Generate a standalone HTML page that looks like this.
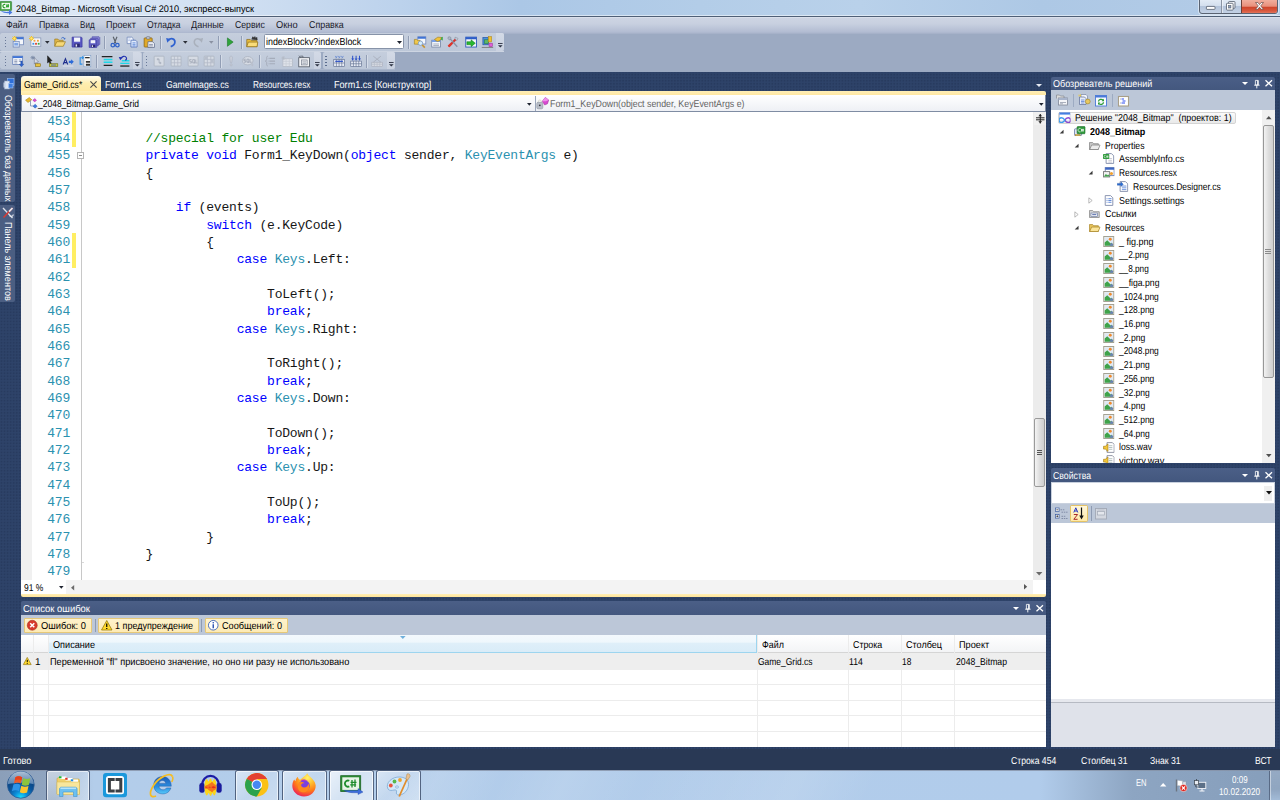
<!DOCTYPE html>
<html><head><meta charset="utf-8"><title>2048_Bitmap - Microsoft Visual C# 2010</title>
<style>
*{box-sizing:border-box;margin:0;padding:0}
html,body{width:1280px;height:800px;overflow:hidden;background:#2e4369 radial-gradient(circle at 1.5px 1.5px,#283b5f .75px,rgba(40,59,95,0) 1.25px) 0 0/3.05px 3.05px;font-family:"Liberation Sans",sans-serif;font-size:9.4px;color:#000}
.a{position:absolute}
.t{position:absolute;white-space:pre;line-height:1;transform-origin:0 0;text-rendering:geometricPrecision}
svg{position:absolute;overflow:visible}
.k{color:#0000ff}.y{color:#2b91af}.c{color:#008000}
.cl{position:absolute;left:84.6px;white-space:pre;font-family:"Liberation Mono",monospace;font-size:13px;letter-spacing:-0.2px;line-height:17.33px;height:17.33px;color:#161616}
.ln{position:absolute;left:32px;width:38px;text-align:right;white-space:pre;font-family:"Liberation Mono",monospace;font-size:13px;letter-spacing:-0.2px;line-height:17.33px;height:17.33px;color:#2b91af}
</style></head><body>
<div class="a" style="left:0px;top:0px;width:1280px;height:17px;background:linear-gradient(90deg,#dfeaf7 0,#d1e0f2 230px,#bcd2ec 400px,#abc7e6 520px,#b3cde8 700px,#b9d1ea 860px,#adc8e5 1040px,#b4cce7 1280px)"></div>
<div class="a" style="left:0px;top:14.6px;width:1280px;height:1px;background:rgba(255,255,255,.5)"></div>
<div class="a" style="left:0px;top:15.6px;width:1280px;height:1.4px;background:#4f5f76"></div>
<div class="t" style="left:16.00px;top:5px;font-size:9.65px;color:#000;transform:scaleX(0.9474);">2048_Bitmap - Microsoft Visual C# 2010, экспресс-выпуск</div>
<svg style="left:0px;top:1.1px" width="12.6" height="13.5" viewBox="0 0 12.6 13.5"><rect x="0" y=".5" width="11.600" height="9" rx=".6" fill="#4ea64c"/><rect x="0" y=".5" width="11.600" height="9" rx=".6" fill="none" stroke="#2f7f30" stroke-width=".6"/><rect x="1.600" y="1.900" width="8.400" height="6.200" fill="#f0f8ee"/><path d="M5.300 3.500a1.700 1.700 0 1 0 0 3.100" fill="none" stroke="#1c9a20" stroke-width="1.100"/><path d="M6.900 3.300v3.500M8.300 3v3.500M6.200 4.300h2.900M6 5.500h2.900" stroke="#1c9a20" stroke-width=".8"/><path d="M.8 10.100c2.500.8 5.500.9 8.200.7V8.600l3.400 2.900L9 14v-1.700c-3 .2-6-.4-8.200-2.200z" fill="#4a7ae0"/></svg>
<div class="a" style="left:1199px;top:-2px;width:79px;height:15.6px;border:1px solid #5a6372;border-radius:0 0 3px 3px;overflow:hidden;background:linear-gradient(#e4ecf6 0,#d4dfee 48%,#b3c3da 52%,#c3d1e5 100%);box-shadow:0 0 0 1px rgba(255,255,255,.45)"><div class="a" style="left:20.500px;top:0;width:1px;height:16px;background:#8a93a3"></div><div class="a" style="left:21.500px;top:0;width:1px;height:16px;background:rgba(255,255,255,.5)"></div><div class="a" style="left:41px;top:0;width:37px;height:16px;background:linear-gradient(#f2b3a3 0,#e8907c 45%,#cf452b 52%,#d9593f 75%,#e8907a 100%);border-left:1px solid #6b4038"></div></div>
<svg style="left:1206px;top:6.2px" width="9.4" height="3.8" viewBox="0 0 9.4 3.8"><rect x=".4" y=".4" width="8.600" height="3" rx=".6" fill="#fff" stroke="#535c6b" stroke-width=".8"/></svg>
<svg style="left:1225.6px;top:1.2px" width="9.6" height="9.6" viewBox="0 0 9.6 9.6"><rect x="2.600" y=".5" width="6.400" height="6.800" rx=".7" fill="#f4f6fa" stroke="#535c6b" stroke-width=".8"/><rect x=".5" y="2.300" width="6.600" height="6.800" rx=".7" fill="#fff" stroke="#535c6b" stroke-width=".8"/><rect x="2.700" y="4.600" width="2.200" height="2.400" fill="#8fa2c0" stroke="#535c6b" stroke-width=".6"/></svg>
<svg style="left:1255.2px;top:2.2px" width="9" height="7.8" viewBox="0 0 9 7.8"><path d="M.5.500h2.400L4.500 2.600 6.100.5h2.400L5.700 3.900 8.500 7.300H6.100L4.500 5.200 2.900 7.300H.5L3.300 3.900z" fill="#fff" stroke="#6a4a48" stroke-width=".7"/></svg>
<div class="a" style="left:0px;top:17px;width:1280px;height:15px;background:linear-gradient(#e2e7f0 0,#cdd4e3 8%,#c8d0e0 45%,#b2bcd2 100%)"></div>
<div class="t" style="left:5.60px;top:21px;font-size:9.96px;color:#1b1b2a;transform:scaleX(0.8863);">Файл</div>
<div class="t" style="left:38.50px;top:21px;font-size:9.96px;color:#1b1b2a;transform:scaleX(0.8862);">Правка</div>
<div class="t" style="left:79.60px;top:21px;font-size:9.96px;color:#1b1b2a;transform:scaleX(0.8104);">Вид</div>
<div class="t" style="left:105.70px;top:21px;font-size:9.96px;color:#1b1b2a;transform:scaleX(0.9086);">Проект</div>
<div class="t" style="left:146.80px;top:21px;font-size:9.96px;color:#1b1b2a;transform:scaleX(0.8515);">Отладка</div>
<div class="t" style="left:191.20px;top:21px;font-size:9.96px;color:#1b1b2a;transform:scaleX(0.9119);">Данные</div>
<div class="t" style="left:234.80px;top:21px;font-size:9.96px;color:#1b1b2a;transform:scaleX(0.8741);">Сервис</div>
<div class="t" style="left:275.90px;top:21px;font-size:9.96px;color:#1b1b2a;transform:scaleX(0.9334);">Окно</div>
<div class="t" style="left:308.80px;top:21px;font-size:9.96px;color:#1b1b2a;transform:scaleX(0.8912);">Справка</div>
<div class="a" style="left:0px;top:32px;width:1280px;height:40px;background:#9caac2"></div>
<div class="a" style="left:0px;top:32px;width:1280px;height:1.5px;background:linear-gradient(#b2bcd2,#a2aec6)"></div>
<div class="a" style="left:0px;top:33px;width:504px;height:17.6px;background:linear-gradient(#c5cedd,#bcc7d8);border-radius:2px"></div>
<div class="a" style="left:0px;top:52px;width:141.5px;height:17.2px;background:linear-gradient(#c5cedd,#bcc7d8);border-radius:2px"></div>
<div class="a" style="left:143px;top:52px;width:178.3px;height:17.2px;background:linear-gradient(#c5cedd,#bcc7d8);border-radius:2px"></div>
<div class="a" style="left:322.7px;top:52px;width:72.7px;height:17.2px;background:linear-gradient(#c5cedd,#bcc7d8);border-radius:2px"></div>
<div class="a" style="left:0px;top:50.6px;width:504px;height:1px;background:#cdd5e2"></div>
<div class="a" style="left:0px;top:69.2px;width:395px;height:1px;background:#aab6cb"></div>
<div class="a" style="left:495.8px;top:33px;width:8.2px;height:17.6px;background:linear-gradient(#d3dae6,#c9d1e0);border-radius:0 2px 2px 0"></div><svg style="left:497.6px;top:43.2px" width="4.6" height="4.6" viewBox="0 0 4.6 4.6"><path d="M0 .5h4.600" stroke="#2a3040" stroke-width=".9"/><path d="M0 2.200h4.600L2.300 4.600z" fill="#2a3040"/></svg>
<div class="a" style="left:133.2px;top:52px;width:8.3px;height:17.2px;background:linear-gradient(#d3dae6,#c9d1e0);border-radius:0 2px 2px 0"></div><svg style="left:135.05px;top:61.8px" width="4.6" height="4.6" viewBox="0 0 4.6 4.6"><path d="M0 .5h4.600" stroke="#2a3040" stroke-width=".9"/><path d="M0 2.200h4.600L2.300 4.600z" fill="#2a3040"/></svg>
<div class="a" style="left:313.7px;top:52px;width:7.6px;height:17.2px;background:linear-gradient(#d3dae6,#c9d1e0);border-radius:0 2px 2px 0"></div><svg style="left:315.2px;top:61.8px" width="4.6" height="4.6" viewBox="0 0 4.6 4.6"><path d="M0 .5h4.600" stroke="#2a3040" stroke-width=".9"/><path d="M0 2.200h4.600L2.300 4.600z" fill="#2a3040"/></svg>
<div class="a" style="left:387px;top:52px;width:8.4px;height:17.2px;background:linear-gradient(#d3dae6,#c9d1e0);border-radius:0 2px 2px 0"></div><svg style="left:388.9px;top:61.8px" width="4.6" height="4.6" viewBox="0 0 4.6 4.6"><path d="M0 .5h4.600" stroke="#2a3040" stroke-width=".9"/><path d="M0 2.200h4.600L2.300 4.600z" fill="#2a3040"/></svg>
<div class="a" style="left:4.6px;top:36.6px;width:1.5px;height:1.5px;background:#4d5f82;border-radius:.5px"></div><div class="a" style="left:4.6px;top:39.65px;width:1.5px;height:1.5px;background:#4d5f82;border-radius:.5px"></div><div class="a" style="left:4.6px;top:42.7px;width:1.5px;height:1.5px;background:#4d5f82;border-radius:.5px"></div><div class="a" style="left:4.6px;top:45.75px;width:1.5px;height:1.5px;background:#4d5f82;border-radius:.5px"></div>
<div class="a" style="left:4.6px;top:55.6px;width:1.5px;height:1.5px;background:#4d5f82;border-radius:.5px"></div><div class="a" style="left:4.6px;top:58.65px;width:1.5px;height:1.5px;background:#4d5f82;border-radius:.5px"></div><div class="a" style="left:4.6px;top:61.7px;width:1.5px;height:1.5px;background:#4d5f82;border-radius:.5px"></div><div class="a" style="left:4.6px;top:64.75px;width:1.5px;height:1.5px;background:#4d5f82;border-radius:.5px"></div>
<div class="a" style="left:145.6px;top:55.6px;width:1.5px;height:1.5px;background:#4d5f82;border-radius:.5px"></div><div class="a" style="left:145.6px;top:58.65px;width:1.5px;height:1.5px;background:#4d5f82;border-radius:.5px"></div><div class="a" style="left:145.6px;top:61.7px;width:1.5px;height:1.5px;background:#4d5f82;border-radius:.5px"></div><div class="a" style="left:145.6px;top:64.75px;width:1.5px;height:1.5px;background:#4d5f82;border-radius:.5px"></div>
<div class="a" style="left:325.3px;top:55.6px;width:1.5px;height:1.5px;background:#4d5f82;border-radius:.5px"></div><div class="a" style="left:325.3px;top:58.65px;width:1.5px;height:1.5px;background:#4d5f82;border-radius:.5px"></div><div class="a" style="left:325.3px;top:61.7px;width:1.5px;height:1.5px;background:#4d5f82;border-radius:.5px"></div><div class="a" style="left:325.3px;top:64.75px;width:1.5px;height:1.5px;background:#4d5f82;border-radius:.5px"></div>
<svg style="left:12.4px;top:35.6px" width="12.2" height="12.2" viewBox="0 0 16 16"><rect x="4" y="1.500" width="11" height="10" fill="#f4f7fc" stroke="#6f86b8"/><rect x="4" y="1.500" width="11" height="2.800" fill="#3f74d6"/><rect x="1.500" y="7" width="8" height="7.500" fill="#dfe9f8" stroke="#6f86b8"/><rect x="3" y="9" width="5" height="3.500" fill="#7fa6e6"/><path d="M3.200 0v6.400M0 3.200h6.400M.9.900l4.600 4.600M5.500.9.900 5.500" stroke="#f3c21c" stroke-width="1.300"/><circle cx="3.200" cy="3.200" r="1.500" fill="#ffe680"/></svg>
<svg style="left:28.9px;top:35.6px" width="12.2" height="12.2" viewBox="0 0 16 16"><rect x="2.500" y="2.500" width="13" height="11" fill="#f4f7fc" stroke="#8796b4"/><rect x="6" y="5" width="2.400" height="2.400" fill="#f0a040"/><rect x="10.500" y="5" width="2.400" height="2.400" fill="#f0a040"/><rect x="4.500" y="9" width="2.400" height="2.400" fill="#3b8fe0"/><rect x="8" y="9" width="2.400" height="2.400" fill="#e0402c"/><rect x="11.500" y="9" width="2.400" height="2.400" fill="#38a844"/><path d="M3.200 0v6.400M0 3.200h6.400M.9.900l4.600 4.600M5.500.9.900 5.500" stroke="#f3c21c" stroke-width="1.300"/><circle cx="3.200" cy="3.200" r="1.500" fill="#ffe680"/></svg>
<svg style="left:54.3px;top:35.6px" width="12.2" height="12.2" viewBox="0 0 16 16"><path d="M1 13.500V4h4l1.500 1.600H12v2" fill="#e2b84a" stroke="#9a7a20" stroke-width=".9"/><path d="M1 13.500 3.600 7.500H15l-2.800 6z" fill="#f7d977" stroke="#9a7a20" stroke-width=".9"/><path d="M9.500 3.200c1.500-2 4-1.600 4.600.6" fill="none" stroke="#3f6fc8" stroke-width="1.200"/><path d="M15.300 2.200 14.300 5l-2.300-1.500z" fill="#3f6fc8"/></svg>
<svg style="left:71.0px;top:35.6px" width="12.2" height="12.2" viewBox="0 0 16 16"><path d="M1.500 1.500h12l1 1v12h-13z" fill="#5a58c4" stroke="#3a38a0"/><rect x="4" y="2" width="8" height="5.500" fill="#f2f4fb"/><rect x="4.500" y="10" width="7" height="4.500" fill="#2a2870"/><rect x="6" y="11" width="2" height="3" fill="#e8e8f4"/></svg>
<svg style="left:87.6px;top:35.6px" width="12.2" height="12.2" viewBox="0 0 16 16"><path d="M5.500 1h9l1 1v9h-10z" fill="#8a88d4" stroke="#4a48a8" stroke-width=".8"/><path d="M3.500 3h9l1 1v9h-10z" fill="#7472cc" stroke="#4a48a8" stroke-width=".8"/><path d="M1.500 5h9l1 1v9h-10z" fill="#605ec4" stroke="#3e3ca0" stroke-width=".8"/><rect x="3.500" y="5.500" width="6" height="4" fill="#f2f4fb"/><rect x="4" y="11.500" width="5.500" height="3.200" fill="#2a2870"/><rect x="5" y="12.200" width="1.600" height="2.200" fill="#e8e8f4"/></svg>
<svg style="left:109.3px;top:35.6px" width="12.2" height="12.2" viewBox="0 0 16 16"><path d="M5.500 1 9 9.500M10.500 1 7 9.500" stroke="#5a6068" stroke-width="1.500" fill="none"/><circle cx="5" cy="12" r="2.300" fill="none" stroke="#2f62c8" stroke-width="1.700"/><circle cx="11" cy="12" r="2.300" fill="none" stroke="#2f62c8" stroke-width="1.700"/></svg>
<svg style="left:126.4px;top:35.6px" width="12.2" height="12.2" viewBox="0 0 16 16"><path d="M1.500 1.500h6l2 2v6.500h-8z" fill="#f4f8ff" stroke="#6f86b8"/><path d="M6.500 5.500h6l2 2v7h-8z" fill="#dfeafc" stroke="#4f6eb8"/><path d="M8.500 9h4M8.500 11h4M8.500 13h4" stroke="#3f6fd0" stroke-width=".9"/><path d="M3 4h3M3 6h2" stroke="#8fa6d6" stroke-width=".9"/></svg>
<svg style="left:143.4px;top:35.6px" width="12.2" height="12.2" viewBox="0 0 16 16"><rect x="1.500" y="2.500" width="10.500" height="12" rx="1" fill="#e0a928" stroke="#8a6410"/><rect x="4.500" y="1" width="4.500" height="3" rx=".8" fill="#c8ccd6" stroke="#5c6270" stroke-width=".8"/><path d="M6.500 7.500h6l2.500 2.500v5h-8.500z" fill="#f4f6fb" stroke="#5c6a8a"/><path d="M8 11h5M8 13h5" stroke="#5c6a8a" stroke-width=".9"/></svg>
<svg style="left:165.3px;top:35.6px" width="12.2" height="12.2" viewBox="0 0 16 16"><path d="M4.500 5.500C8 2 13 3.500 13 8c0 3-2 5-5.500 6" fill="none" stroke="#2f62d0" stroke-width="2.300"/><path d="M1.500 2.500 7.500 4 3 9z" fill="#2f62d0"/></svg>
<svg style="left:191.5px;top:35.6px" width="12.2" height="12.2" viewBox="0 0 16 16"><path d="M11.500 5.500C8 2 3 3.500 3 8c0 3 2 5 5.500 6" fill="none" stroke="#a9b0bc" stroke-width="2"/><path d="M14.500 2.500 8.500 4 13 9z" fill="#a9b0bc"/></svg>
<svg style="left:223.5px;top:35.6px" width="12.2" height="12.2" viewBox="0 0 16 16"><path d="M4.500 2.500 12 8 4.500 13.500z" fill="#2ea33a" stroke="#1c7a28" stroke-width=".8"/></svg>
<svg style="left:245.9px;top:35.6px" width="12.2" height="12.2" viewBox="0 0 16 16"><path d="M1 14V4.500h4.500L7 6h7.500v8z" fill="#e9bd3e" stroke="#8a6a14" stroke-width=".9"/><path d="M1 14 3 8h12.500l-1 6z" fill="#f9dc78" stroke="#8a6a14" stroke-width=".9"/><path d="M7.500 4.500 9 1l1.500 2 1.200-2.200 1 2.500 1.500-1.500.5 3.500" fill="#3a3a3a" stroke="#222" stroke-width=".8"/></svg>
<svg style="left:413.9px;top:35.6px" width="12.2" height="12.2" viewBox="0 0 16 16"><rect x="5" y="1" width="10.500" height="9.500" fill="#f4f7fc" stroke="#6f86b8"/><rect x="5" y="1" width="10.500" height="2.600" fill="#3f74d6"/><path d="M.5 4.500h3l1.200 1.200H8v5H.5z" fill="#f0c84c" stroke="#9a7a20" stroke-width=".8"/><circle cx="8.500" cy="9.500" r="2.900" fill="#d6ecfa" stroke="#7d9cc4" stroke-width="1.100"/><path d="M10.800 11.800 14.200 15.200" stroke="#c89430" stroke-width="2.200"/></svg>
<svg style="left:430.6px;top:35.6px" width="12.2" height="12.2" viewBox="0 0 16 16"><rect x="1" y="5.500" width="11.500" height="9" fill="#f4f7fc" stroke="#6f7f9c"/><rect x="1" y="5.500" width="11.500" height="2.300" fill="#6f9ae6"/><path d="M3 10.500h7.500M3 12.500h7.500" stroke="#8a95aa" stroke-width=".9"/><path d="M4.500 4.500 9 1.500l5.500.5-3.500 4.500-3 .5z" fill="#f0c23c" stroke="#a07c18" stroke-width=".8"/><path d="M13 2l2.500-1v5L13 5z" fill="#46a852"/></svg>
<svg style="left:447.3px;top:35.6px" width="12.2" height="12.2" viewBox="0 0 16 16"><path d="M2 13.800 12.500 3.200" stroke="#d8302c" stroke-width="2.600"/><path d="M2 13.800 6 9.800" stroke="#e0382c" stroke-width="3"/><path d="M3 2.500 13.500 14" stroke="#8a94a6" stroke-width="1.800"/><path d="M1.500 1.500c1.500-1 3.500-.5 4 1.500l-2 2c-2-.3-2.800-2-2-3.500z" fill="#aeb8c8" stroke="#6c7688" stroke-width=".6"/><path d="M10.500 1.500 14.500 3l-1.500 3-2.500-2z" fill="#c4ccd8" stroke="#7a8496" stroke-width=".6"/></svg>
<svg style="left:464.5px;top:35.6px" width="12.2" height="12.2" viewBox="0 0 16 16"><rect x="1" y="1.500" width="14" height="13" fill="#f4f7fc" stroke="#2c58b8" stroke-width="1.200"/><rect x="1" y="1.500" width="14" height="2.800" fill="#2c5cc8"/><path d="M2.500 7.500H8V5l5.500 4.500L8 14v-2.500H2.500z" fill="#28b830" stroke="#0f7a18" stroke-width=".7"/></svg>
<svg style="left:480.9px;top:35.6px" width="12.2" height="12.2" viewBox="0 0 16 16"><rect x="2.500" y="2" width="7" height="9.500" fill="#4a90e0" stroke="#2c5ca8"/><rect x="4.500" y="5" width="5" height="5" fill="#5cb868" stroke="#2c7838" stroke-width=".7"/><rect x="9.500" y=".8" width="4.500" height="7" fill="#f0c030" stroke="#a8841c" stroke-width=".7"/><rect x="10.500" y="9.500" width="4.500" height="4.500" fill="#e060d8" stroke="#9c3896" stroke-width=".7"/><path d="M1 15h15" stroke="#7a7a7a" stroke-width="1.200"/></svg>
<div class="a" style="left:103.7px;top:35.5px;width:1px;height:13px;background:#929eb5"></div>
<div class="a" style="left:104.7px;top:35.5px;width:1px;height:13px;background:#d5dce8"></div>
<div class="a" style="left:159.9px;top:35.5px;width:1px;height:13px;background:#929eb5"></div>
<div class="a" style="left:160.9px;top:35.5px;width:1px;height:13px;background:#d5dce8"></div>
<div class="a" style="left:218.4px;top:35.5px;width:1px;height:13px;background:#929eb5"></div>
<div class="a" style="left:219.4px;top:35.5px;width:1px;height:13px;background:#d5dce8"></div>
<div class="a" style="left:240.7px;top:35.5px;width:1px;height:13px;background:#929eb5"></div>
<div class="a" style="left:241.7px;top:35.5px;width:1px;height:13px;background:#d5dce8"></div>
<div class="a" style="left:408px;top:35.5px;width:1px;height:13px;background:#929eb5"></div>
<div class="a" style="left:409px;top:35.5px;width:1px;height:13px;background:#d5dce8"></div>
<svg style="left:44.9px;top:40.6px" width="4.6" height="2.7" viewBox="0 0 4.6 2.7"><path d="M0 0h4.600L2.300 2.700z" fill="#2c3038"/></svg>
<svg style="left:182.7px;top:40.6px" width="4.6" height="2.7" viewBox="0 0 4.6 2.7"><path d="M0 0h4.600L2.300 2.700z" fill="#2c3038"/></svg>
<svg style="left:209.2px;top:40.6px" width="4.6" height="2.7" viewBox="0 0 4.6 2.7"><path d="M0 0h4.600L2.300 2.700z" fill="#8a92a2"/></svg>
<svg style="left:12.4px;top:54.9px" width="12.2" height="12.2" viewBox="0 0 16 16"><rect x="1" y="1.500" width="13" height="11" fill="#f4f7fc" stroke="#5c78b4"/><rect x="1" y="1.500" width="13" height="2.500" fill="#3f74d6"/><path d="M3 6.500h4M3 8.500h4M3 10.500h4M9 6.500h3M9 8.500h3" stroke="#7a88a8" stroke-width="1"/><path d="M11.500 8v4h-2l3 3.500 3-3.500h-2V8z" fill="#2c62d0" stroke="#1c4494" stroke-width=".5"/></svg>
<svg style="left:28.9px;top:54.9px" width="12.2" height="12.2" viewBox="0 0 16 16"><path d="M2 3.500h6M5 1v5M3 1.500l4 4M7 1.500l-4 4" stroke="#7a8aa6" stroke-width="1.100"/><path d="M7 3.500 12.500 9 10 9.500l1.500 3-1.500.7L8.500 10 7 12z" fill="#d8dce6" stroke="#6a7488" stroke-width=".7"/><rect x="8.500" y="11.500" width="6.500" height="3.500" fill="#e8c440" stroke="#8a7018" stroke-width=".8"/></svg>
<svg style="left:45.9px;top:54.9px" width="12.2" height="12.2" viewBox="0 0 16 16"><path d="M2 1 8 7.500 5.500 8l1.500 3.500-1.500.7L4 8.800 2 10.500z" fill="#222" stroke="#000" stroke-width=".5"/><rect x="4.500" y="11.500" width="11" height="3.500" fill="#d8d838" stroke="#6a6a14" stroke-width=".8"/><path d="M6.500 13.200h7" stroke="#3a50c0" stroke-width="1.200"/></svg>
<svg style="left:62.4px;top:54.9px" width="12.2" height="12.2" viewBox="0 0 16 16"><path d="M1.500 12.500 4.500 5 7.500 12.500M2.600 10h3.800" stroke="#1c2c8c" stroke-width="1.400" fill="none"/><path d="M9 7.500h3V5.500L15.500 9 12 12.500V10.500H9z" fill="#2c6ad8"/><path d="M1 14.500h14" stroke="#e8eaf2" stroke-width="1"/></svg>
<svg style="left:79.4px;top:54.9px" width="12.2" height="12.2" viewBox="0 0 16 16"><rect x="6.500" y=".5" width="9" height="15" fill="#fdfdfd" stroke="#7d9cc4" stroke-width=".8"/><path d="M8 3.500h6" stroke="#222" stroke-width="1.600"/><path d="M9 9h5.500M9 12.800h5.500" stroke="#333" stroke-width="2.400"/><path d="M4.500 3.500H1.500V12h3" fill="none" stroke="#2c90e8" stroke-width="1.400"/><path d="M4 1 7 3.500 4 6z" fill="#2c90e8"/></svg>
<svg style="left:100.9px;top:54.9px" width="12.2" height="12.2" viewBox="0 0 16 16"><path d="M1 2h14M3.500 13.500H15" stroke="#222" stroke-width="1.700"/><path d="M3.500 6h11.500M3.500 9.500h11.500" stroke="#1ed8e8" stroke-width="2"/></svg>
<svg style="left:118.3px;top:54.9px" width="12.2" height="12.2" viewBox="0 0 16 16"><path d="M3 14.500h12" stroke="#222" stroke-width="1.700"/><path d="M5 7.500h10M3 11h12" stroke="#1ed8e8" stroke-width="1.800"/><path d="M4.500 4.500C5 1.500 9.500.5 11 3.500c.8 1.800-.5 3-1.500 3.300" fill="none" stroke="#2030b0" stroke-width="1.500"/><path d="M1 2.500 6 3 3 7z" fill="#2030b0"/></svg>
<svg style="left:152.9px;top:54.9px" width="12.2" height="12.2" viewBox="0 0 16 16"><rect x="1.500" y="1.500" width="13" height="13" rx="1" fill="#d6dbe4" stroke="#aab1bf"/><path d="M5 5.500h3v5h3M6.500 4v3M9.500 9v3" stroke="#a2a9b8" stroke-width="1" fill="none"/></svg>
<svg style="left:169.7px;top:54.9px" width="12.2" height="12.2" viewBox="0 0 16 16"><rect x="1.500" y="1.500" width="13" height="13" rx="1" fill="#d6dbe4" stroke="#aab1bf"/><path d="M1.500 5.800h13M1.500 10.200h13M5.800 1.500v13M10.200 1.500v13" stroke="#b2b8c6" stroke-width="1"/></svg>
<svg style="left:186.5px;top:54.9px" width="12.2" height="12.2" viewBox="0 0 16 16"><rect x="1.500" y="1.500" width="13" height="13" rx="1" fill="#d6dbe4" stroke="#aab1bf"/><path d="M3.500 10.500h2.300V8.300H3.500V6h2.500M7.500 6h2.500v4.500H7.500zM9 9.500l1.500 1.800M11.500 6v4.500h2.300" stroke="#9aa1b0" stroke-width=".9" fill="none"/></svg>
<svg style="left:203.2px;top:54.9px" width="12.2" height="12.2" viewBox="0 0 16 16"><rect x="1.500" y="1.500" width="13" height="13" rx="1" fill="#d6dbe4" stroke="#aab1bf"/><path d="M1.500 5.800h13M1.500 10.200h13M5.800 1.500v13M10.200 1.500v13" stroke="#b2b8c6" stroke-width="1"/><rect x="2" y="2" width="3.500" height="3.500" fill="#b8bfcc"/><rect x="10.500" y="6.200" width="3.500" height="3.800" fill="#b8bfcc"/></svg>
<svg style="left:224.6px;top:54.9px" width="12.2" height="12.2" viewBox="0 0 16 16"><path d="M8 1.500c1.500 0 2 1 1.800 3L8.800 10H7.200L6.200 4.500c-.2-2 .3-3 1.800-3z" fill="#c9ced9" stroke="#a9b0be" stroke-width=".7"/><circle cx="8" cy="13" r="1.400" fill="#c9ced9" stroke="#a9b0be" stroke-width=".7"/></svg>
<svg style="left:242.4px;top:54.9px" width="12.2" height="12.2" viewBox="0 0 16 16"><ellipse cx="7.500" cy="7.500" rx="7" ry="5.500" fill="#d6dbe4" stroke="#aab1bf"/><path d="M2.500 9.500h2.300V7.500H2.500V5.500h2.500M6.500 5.500h2.500v4H6.500zM8 8.700l1.500 1.600M10.500 5.500v4h2.300" stroke="#949bab" stroke-width=".9" fill="none"/><path d="M13 10v2.500h-1.500l2 2.500 2-2.500H14V10z" fill="#b9bfcc"/></svg>
<svg style="left:263.9px;top:54.9px" width="12.2" height="12.2" viewBox="0 0 16 16"><path d="M5 1.500C3 1.500 3.500 4 3.500 5.500S3 8 1.500 8C3 8 3.500 9 3.500 10.500S3 14.500 5 14.500" fill="none" stroke="#a5acba" stroke-width="1.200"/><path d="M7 4.500h7.500M7 8h7.500M7 11.500h7.500" stroke="#a5acba" stroke-width="1.500"/><path d="M5 4.500h1M5 8h1M5 11.500h1" stroke="#a5acba" stroke-width="1"/></svg>
<svg style="left:280.9px;top:54.9px" width="12.2" height="12.2" viewBox="0 0 16 16"><rect x="2.500" y="5" width="12.500" height="10" fill="#dfe3ea" stroke="#b4bac6"/><path d="M2.500 8.300h12.500M2.500 11.600h12.500M6.700 5v10M10.900 5v10" stroke="#c4cad4" stroke-width=".9"/><path d="M.5 4h5M3 1.500v5M1.200 2.200l3.600 3.600M4.800 2.200 1.200 5.800" stroke="#b4bac6" stroke-width="1"/></svg>
<svg style="left:297.9px;top:54.9px" width="12.2" height="12.2" viewBox="0 0 16 16"><rect x="1" y="3.500" width="14" height="12" fill="#f2f3f6" stroke="#555c68" stroke-width="1.100"/><path d="M3 1.500h3.500V3.500" fill="none" stroke="#555c68" stroke-width="1"/><rect x="4.500" y="6.500" width="7.500" height="6.500" fill="#e4e6ec" stroke="#7a8290" stroke-width=".9"/><path d="M6 9h4.500M6 11h4.500" stroke="#8a92a0" stroke-width=".8"/><path d="M1 1l3 2.500" stroke="#555c68"/></svg>
<svg style="left:333.1px;top:54.9px" width="12.2" height="12.2" viewBox="0 0 16 16"><rect x="1" y="6" width="14" height="9" fill="#e8ecf6" stroke="#5a6a8c" stroke-width=".8"/><path d="M1 10.500h14M4.500 6v9M8 6v9M11.500 6v9" stroke="#5a6a8c" stroke-width=".8"/><path d="M3 8.300h10" stroke="#2c50c8" stroke-width="1.600"/><path d="M3 1.200l1.300 2.600L5.600 1.200M7 1.200l1.300 2.600L9.600 1.200M11 1.200l1.300 2.600 1.300-2.600" stroke="#5a80d0" stroke-width=".9" fill="none"/><path d="M2.500 4.800h11" stroke="#7a8cb0" stroke-width=".7" stroke-dasharray="1 1"/></svg>
<svg style="left:349.9px;top:54.9px" width="12.2" height="12.2" viewBox="0 0 16 16"><rect x="1" y="8" width="14" height="7" fill="#e8ecf6" stroke="#5a6a8c" stroke-width=".8"/><path d="M1 11.500h14M4.500 8v7M8 8v7M11.500 8v7" stroke="#5a6a8c" stroke-width=".8"/><path d="M3.500 1v6M8 1v6M12.500 1v6" stroke="#2c50c8" stroke-width="1.300"/><path d="M1.500 4.500l2 2.500 2-2.500zM6 4.500l2 2.500 2-2.500zM10.500 4.500l2 2.500 2-2.500z" fill="#2c50c8"/></svg>
<svg style="left:371.4px;top:54.9px" width="12.2" height="12.2" viewBox="0 0 16 16"><rect x="1" y="9.500" width="14" height="5.500" fill="#d6dae2" stroke="#a8aebb" stroke-width=".8"/><path d="M1 12.200h14M4.500 9.500V15M8 9.500V15M11.500 9.500V15" stroke="#b4bac6" stroke-width=".8"/><path d="M3 1.500l10 8M13 1.500l-10 8" stroke="#a8aebb" stroke-width="1.100"/></svg>
<div class="a" style="left:95.5px;top:54.5px;width:1px;height:13px;background:#929eb5"></div>
<div class="a" style="left:96.5px;top:54.5px;width:1px;height:13px;background:#d5dce8"></div>
<div class="a" style="left:219.7px;top:54.5px;width:1px;height:13px;background:#929eb5"></div>
<div class="a" style="left:220.7px;top:54.5px;width:1px;height:13px;background:#d5dce8"></div>
<div class="a" style="left:259px;top:54.5px;width:1px;height:13px;background:#929eb5"></div>
<div class="a" style="left:260px;top:54.5px;width:1px;height:13px;background:#d5dce8"></div>
<div class="a" style="left:366px;top:54.5px;width:1px;height:13px;background:#929eb5"></div>
<div class="a" style="left:367px;top:54.5px;width:1px;height:13px;background:#d5dce8"></div>
<div class="a" style="left:263.5px;top:34.3px;width:140px;height:15.2px;background:#fff;border:1px solid #8793a8;border-radius:1.5px"></div>
<div class="t" style="left:265.80px;top:38px;font-size:10.18px;color:#000;transform:scaleX(0.8724);">indexBlockv?indexBlock</div>
<svg style="left:396.6px;top:40.8px" width="5" height="3" viewBox="0 0 5 3"><path d="M0 0h5L2.500 3z" fill="#1f2430"/></svg>
<div class="a" style="left:0px;top:74px;width:15.4px;height:128.3px;background:#4b5e82;border-radius:0 2px 2px 0"></div>
<div class="a" style="left:0px;top:204.6px;width:15.4px;height:97.2px;background:#4b5e82;border-radius:0 2px 2px 0"></div>
<div class="t" style="left:11.53px;top:94.6px;font-size:9.96px;color:#fff;transform:rotate(90deg) scaleX(0.8802);">Обозреватель баз данных</div>
<div class="t" style="left:11.53px;top:221.5px;font-size:9.96px;color:#fff;transform:rotate(90deg) scaleX(0.9110);">Панель элементов</div>
<svg style="left:2.5px;top:78px" width="11.5" height="12" viewBox="0 0 11.5 12"><rect x="4.500" y=".5" width="6.500" height="7" fill="#2f6fd8" stroke="#9cc0f4" stroke-width=".6"/><rect x="1.500" y="3" width="5" height="8" fill="#dfe8f6" stroke="#8ca0c4" stroke-width=".6"/><rect x="5.500" y="5.500" width="4.500" height="4.500" fill="#3f7fe0" stroke="#a8c8f8" stroke-width=".6"/><rect x=".5" y="4.500" width="2" height="5" fill="#c4d0e4"/></svg>
<svg style="left:2px;top:206.5px" width="11.5" height="12" viewBox="0 0 11.5 12"><path d="M1 1l9.500 10" stroke="#e0e4ec" stroke-width="1.300"/><path d="M10.500 1 1.500 10.500" stroke="#d83a34" stroke-width="1.600"/><path d="M10.500 1 7 4.700" stroke="#e8ecf2" stroke-width="1.800"/><path d="M7.500 8.500c1.500 1.500 3.500 1 3.800-1" fill="none" stroke="#e0e4ec" stroke-width="1.200"/></svg>
<div class="a" style="left:20.6px;top:76px;width:80.4px;height:16px;background:linear-gradient(#fffcf0,#ffeeb0 45%,#ffe8a0);border-radius:3px 3px 0 0"></div>
<div class="a" style="left:20.6px;top:91px;width:1025.4px;height:4px;background:linear-gradient(#ffefb8,#ffe7a2);border-radius:0 2px 0 0"></div>
<div class="t" style="left:23.70px;top:81px;font-size:10.07px;color:#000;transform:scaleX(0.8460);">Game_Grid.cs*</div>
<div class="t" style="left:105.30px;top:81px;font-size:10.07px;color:#fff;transform:scaleX(0.8656);">Form1.cs</div>
<div class="t" style="left:165.60px;top:81px;font-size:10.07px;color:#fff;transform:scaleX(0.8585);">GameImages.cs</div>
<div class="t" style="left:252.60px;top:81px;font-size:10.07px;color:#fff;transform:scaleX(0.8211);">Resources.resx</div>
<div class="t" style="left:333.80px;top:81px;font-size:10.07px;color:#fff;transform:scaleX(0.9043);">Form1.cs [Конструктор]</div>
<div class="a" style="left:21px;top:95px;width:1025px;height:17px;background:linear-gradient(#ffffff,#eef0f5);border:1px solid #7f8ca3;border-top:none"></div>
<div class="a" style="left:534.5px;top:96px;width:1px;height:15px;background:#9aa6ba"></div>
<div class="t" style="left:38.00px;top:100px;font-size:9.96px;color:#000;transform:scaleX(0.8530);">_2048_Bitmap.Game_Grid</div>
<div class="t" style="left:549.50px;top:100px;font-size:9.96px;color:#636363;transform:scaleX(0.8856);">Form1_KeyDown(object sender, KeyEventArgs e)</div>
<svg style="left:90.2px;top:81px" width="7" height="7" viewBox="0 0 7 7"><path d="M.4.400 6.600 6.600M6.600.4.400 6.600" stroke="#4a4a4a" stroke-width="1.100"/></svg>
<svg style="left:1035.8px;top:83.6px" width="6" height="3" viewBox="0 0 6 3"><path d="M0 0h6L3 3z" fill="#e6ebf4"/></svg>
<svg style="left:526.6px;top:102.6px" width="4.6" height="2.8" viewBox="0 0 4.6 2.8"><path d="M0 0h4.600L2.300 2.800z" fill="#1f2430"/></svg>
<svg style="left:1038.8px;top:102.6px" width="4.6" height="2.8" viewBox="0 0 4.6 2.8"><path d="M0 0h4.600L2.300 2.800z" fill="#1f2430"/></svg>
<svg style="left:24.5px;top:96.5px" width="13" height="12" viewBox="0 0 13 12"><path d="M.5 3.200 4.300.5 6.800 2.800 3 5.500z" fill="#e8b82c" stroke="#9a7a14" stroke-width=".5"/><path d="M5.500 3.500v5.500h3" fill="none" stroke="#7a8aa8" stroke-width=".8"/><path d="M7.800 3.200l2-1.700 1.700 1.700-1.700 1.700z" fill="#e048d0" stroke="#9a2890" stroke-width=".4"/><path d="M8 9.200l2.200-2 2 2-2 2z" fill="#3a7ae0" stroke="#1f4aa0" stroke-width=".4"/></svg>
<svg style="left:536px;top:96.5px" width="13" height="12.5" viewBox="0 0 13 12.5"><path d="M2.300 5.500V4.200c0-1.600 3-1.600 3 0V5.500" fill="none" stroke="#d8d8c8" stroke-width=".9"/><rect x=".8" y="5.300" width="6" height="6.500" rx="1.300" fill="#b8bec8" stroke="#8a909c" stroke-width=".6"/><circle cx="3.800" cy="8.300" r=".9" fill="#3a3a40"/><path d="M9.300.4 12.700 3 11.500 6.800 8.700 8 6.300 4.200z" fill="#d848d0" stroke="#9a2c94" stroke-width=".5"/><path d="M9.300.4 12.700 3 10 4.200 6.300 4.200z" fill="#f090ec"/></svg>
<div class="a" style="left:21px;top:112px;width:1025px;height:469px;background:#fff"></div>
<div class="a" style="left:21px;top:112px;width:11px;height:469px;background:#f0f0f0"></div>
<div class="a" style="left:81px;top:112px;width:1px;height:469px;background:#c8c8c8"></div>
<div class="a" style="left:72.2px;top:112px;width:3.4px;height:34.7px;background:#ffee62"></div>
<div class="a" style="left:72.2px;top:233.3px;width:3.4px;height:34.7px;background:#ffee62"></div>
<div class="a" style="left:77.4px;top:151.6px;width:7px;height:7px;background:#fff;border:1px solid #b4b4b4"></div>
<div class="a" style="left:79.4px;top:154.6px;width:3px;height:1px;background:#8c8c8c"></div>
<div class="a" style="left:81.5px;top:561.5px;width:2.5px;height:1px;background:#d8d8d8"></div>
<div class="ln" style="top:112.60px">453</div>
<div class="ln" style="top:129.93px">454</div>
<div class="cl" style="top:129.93px">        <span class="c">//special for user Edu</span></div>
<div class="ln" style="top:147.27px">455</div>
<div class="cl" style="top:147.27px">        <span class="k">private</span> <span class="k">void</span> Form1_KeyDown(<span class="k">object</span> sender, <span class="y">KeyEventArgs</span> e)</div>
<div class="ln" style="top:164.60px">456</div>
<div class="cl" style="top:164.60px">        {</div>
<div class="ln" style="top:181.93px">457</div>
<div class="ln" style="top:199.26px">458</div>
<div class="cl" style="top:199.26px">            <span class="k">if</span> (events)</div>
<div class="ln" style="top:216.60px">459</div>
<div class="cl" style="top:216.60px">                <span class="k">switch</span> (e.KeyCode)</div>
<div class="ln" style="top:233.93px">460</div>
<div class="cl" style="top:233.93px">                {</div>
<div class="ln" style="top:251.26px">461</div>
<div class="cl" style="top:251.26px">                    <span class="k">case</span> <span class="y">Keys</span>.Left:</div>
<div class="ln" style="top:268.60px">462</div>
<div class="ln" style="top:285.93px">463</div>
<div class="cl" style="top:285.93px">                        ToLeft();</div>
<div class="ln" style="top:303.26px">464</div>
<div class="cl" style="top:303.26px">                        <span class="k">break</span>;</div>
<div class="ln" style="top:320.60px">465</div>
<div class="cl" style="top:320.60px">                    <span class="k">case</span> <span class="y">Keys</span>.Right:</div>
<div class="ln" style="top:337.93px">466</div>
<div class="ln" style="top:355.26px">467</div>
<div class="cl" style="top:355.26px">                        ToRight();</div>
<div class="ln" style="top:372.60px">468</div>
<div class="cl" style="top:372.60px">                        <span class="k">break</span>;</div>
<div class="ln" style="top:389.93px">469</div>
<div class="cl" style="top:389.93px">                    <span class="k">case</span> <span class="y">Keys</span>.Down:</div>
<div class="ln" style="top:407.26px">470</div>
<div class="ln" style="top:424.59px">471</div>
<div class="cl" style="top:424.59px">                        ToDown();</div>
<div class="ln" style="top:441.93px">472</div>
<div class="cl" style="top:441.93px">                        <span class="k">break</span>;</div>
<div class="ln" style="top:459.26px">473</div>
<div class="cl" style="top:459.26px">                    <span class="k">case</span> <span class="y">Keys</span>.Up:</div>
<div class="ln" style="top:476.59px">474</div>
<div class="ln" style="top:493.93px">475</div>
<div class="cl" style="top:493.93px">                        ToUp();</div>
<div class="ln" style="top:511.26px">476</div>
<div class="cl" style="top:511.26px">                        <span class="k">break</span>;</div>
<div class="ln" style="top:528.59px">477</div>
<div class="cl" style="top:528.59px">                }</div>
<div class="ln" style="top:545.92px">478</div>
<div class="cl" style="top:545.92px">        }</div>
<div class="ln" style="top:563.26px">479</div>
<div class="a" style="left:1033px;top:112px;width:13px;height:468.3px;background:#ececec"></div>
<svg style="left:1036.2px;top:571.5px" width="6.4" height="3.6" viewBox="0 0 6.4 3.6"><path d="M0 0h6.400L3.200 3.600z" fill="#6a6a6a"/></svg>
<div class="a" style="left:1034px;top:417.5px;width:10.8px;height:69.8px;background:linear-gradient(90deg,#f4f4f4,#dedede 50%,#cfcfcf);border:1px solid #9a9a9a;border-radius:2px"></div>
<div class="a" style="left:1037px;top:450px;width:5px;height:1px;background:#555"></div>
<div class="a" style="left:1037px;top:452px;width:5px;height:1px;background:#555"></div>
<div class="a" style="left:1037px;top:454px;width:5px;height:1px;background:#555"></div>
<div class="a" style="left:1033.5px;top:112px;width:12.5px;height:12.5px;background:#f0f0f0"></div>
<svg style="left:1035.5px;top:113.5px" width="8.5" height="9.5" viewBox="0 0 8.5 9.5"><path d="M0 3.800h8.500M0 5.800h8.500" stroke="#222" stroke-width="1"/><path d="M4.250 0v9.500" stroke="#222" stroke-width="1"/><path d="M2.300 2.300 4.250.2 6.200 2.300zM2.300 7.200 4.250 9.300 6.200 7.200z" fill="#222"/></svg>
<div class="a" style="left:21px;top:580.3px;width:1025px;height:13.4px;background:#f3f3f3"></div>
<div class="a" style="left:21px;top:580.3px;width:44.5px;height:13.4px;background:#fff"></div>
<div class="a" style="left:1033px;top:580.3px;width:13px;height:13.4px;background:#fff"></div>
<div class="t" style="left:23.70px;top:584px;font-size:9.96px;color:#000;transform:scaleX(0.8507);">91 %</div>
<svg style="left:59px;top:586.3px" width="4.6" height="2.8" viewBox="0 0 4.6 2.8"><path d="M0 0h4.600L2.300 2.800z" fill="#1f2430"/></svg>
<svg style="left:71px;top:584.5px" width="3.2" height="5.4" viewBox="0 0 3.2 5.4"><path d="M3.200 0v5.400L0 2.700z" fill="#6a6a6a"/></svg>
<svg style="left:1024.3px;top:584.2px" width="3.2" height="5.4" viewBox="0 0 3.2 5.4"><path d="M0 0v5.400L3.200 2.700z" fill="#555"/></svg>
<div class="a" style="left:20.6px;top:593.6px;width:1025.4px;height:3px;background:linear-gradient(#ffefb6,#ffe49a);border-radius:0 0 2px 2px"></div>
<svg width="0" height="0" style="position:absolute"><defs>
<symbol id="png" viewBox="0 0 12 12"><rect x=".5" y=".5" width="11" height="11" fill="#f4f1e6" stroke="#9c9a8c"/><rect x="1.5" y="1.5" width="9" height="9" fill="#dfe9f5"/><circle cx="7.6" cy="3.6" r="1.6" fill="#f08a2c"/><path d="M1.5 10.5V7.2L4.3 4.6 8 8.2 9 7.4l1.5 1.5v1.6z" fill="#3fa34a"/><path d="M6.5 10.5 9 7.4l1.5 1.5v1.6z" fill="#6d7fb5"/></symbol>
<symbol id="wav" viewBox="0 0 13 12"><path d="M4.5.5h6l2 2v9h-8z" fill="#fff" stroke="#8a8fa0"/><path d="M6.5 4h4M6.5 6h4M6.5 8h4" stroke="#9aa" stroke-width=".8"/><path d="M.6 4.6h2L5.6 2v8.4L2.6 7.8h-2z" fill="#f3c63a" stroke="#a27a12" stroke-width=".7"/></symbol>
<symbol id="fold" viewBox="0 0 13 11"><path d="M.5 10V2.2h3.6l1.2 1.3h5.2V10z" fill="#e8c35a" stroke="#a8862c" stroke-width=".8"/><path d="M.8 10 2.9 5h9.6l-2.2 5z" fill="#fbe59a" stroke="#a8862c" stroke-width=".8"/></symbol>
<symbol id="foldg" viewBox="0 0 13 11"><path d="M.5 10V2.2h3.6l1.2 1.3h5.2V10z" fill="#c9c9c9" stroke="#7d7d7d" stroke-width=".8"/><path d="M.8 10 2.9 5h9.6l-2.2 5z" fill="#ececec" stroke="#7d7d7d" stroke-width=".8"/></symbol>
<symbol id="refs" viewBox="0 0 13 11"><path d="M.5 10V2.2h3.6l1.2 1.3h6.2V10z" fill="#d6d6d6" stroke="#7d7d7d" stroke-width=".8"/><rect x="2.2" y="5" width="7.5" height="3.6" fill="#fff" stroke="#5c6f9c" stroke-width=".7"/><path d="M3.6 6.8h4.6" stroke="#3d57a0" stroke-width="1"/></symbol>
<symbol id="csf" viewBox="0 0 13 12"><path d="M3.5.5h6l2.5 2.5v8.500h-8.500z" fill="#fff" stroke="#7f8aa8"/><path d="M6 6h4M6 8h4M6 10h4" stroke="#aab" stroke-width=".7"/><rect x="0" y="1" width="7" height="5.500" rx=".8" fill="#2f9a3c"/><path d="M3 2.400a1.400 1.400 0 1 0 0 2.700M4.300 2.800v2.200M5.500 2.800v2.200M3.900 3.400h2M3.900 4.400h2" stroke="#fff" stroke-width=".6" fill="none"/></symbol>
<symbol id="resx" viewBox="0 0 13 12"><rect x="2.500" y=".5" width="10" height="9" fill="#fff" stroke="#6c7fb0"/><rect x="2.500" y=".5" width="10" height="2.400" fill="#3c66c4"/><rect x=".5" y="5" width="7" height="6" fill="#f2f2f2" stroke="#777"/><path d="M1 10.500 3.200 7.700l1.600 1.500 1-1 1.200 1.300v1z" fill="#3fa34a"/><circle cx="9.500" cy="7" r="1.700" fill="#f0a030"/></symbol>
<symbol id="desf" viewBox="0 0 13 12"><path d="M3.500.5h6l2.500 2.500v8.500h-8.500z" fill="#fff" stroke="#7f8aa8"/><path d="M5.500 5.500h5M5.500 7.500h5M5.500 9.500h5" stroke="#3d6fd0" stroke-width=".8"/><path d="M.3 2.500h4.200v-1.600l2.500 2.600-2.500 2.600v-1.600h-4.200z" fill="#2c6fd4" stroke="#1b4a9a" stroke-width=".4"/></symbol>
<symbol id="setf" viewBox="0 0 13 12"><path d="M2.500.5h6l2.500 2.500v8.500h-8.500z" fill="#fff" stroke="#7f8aa8"/><path d="M4 4h1M6 4h3.500M4 6h1M6 6h3.500M4 8h1M6 8h3.500" stroke="#3d6fd0" stroke-width=".9"/></symbol>
<symbol id="csproj" viewBox="0 0 13 12"><rect x=".5" y="3" width="8" height="7.500" rx=".8" fill="#dfe6f5" stroke="#7281a8"/><rect x="1.800" y="9.200" width="5" height="1.600" fill="#f0d070" stroke="#a8862c" stroke-width=".5"/><rect x="3.500" y=".5" width="9" height="8" rx=".8" fill="#2f9a3c" stroke="#1c6a28" stroke-width=".7"/><path d="M7.300 2.600a2 2 0 1 0 0 3.700M8.600 3v3M10.200 3v3M8 3.900h2.900M8 5.200h2.900" stroke="#fff" stroke-width=".8" fill="none"/></symbol>
<symbol id="sln" viewBox="0 0 13 12"><rect x=".5" y=".4" width="12" height="9.600" fill="#fdfdff" stroke="#aab4cc" stroke-width=".7"/><rect x=".5" y=".4" width="12" height="2.600" fill="#3f7ae0"/><rect x=".5" y="2" width="12" height="1.200" fill="#8fb4f0"/><path d="M6.500 9c1.200-2.200 2.600-2.700 3.800-2.700a2.700 2.700 0 0 1 0 5.400C9.100 11.700 7.700 11.200 6.500 9z" fill="none" stroke="#8a48d0" stroke-width="1.500"/><path d="M6.500 9C5.300 11.200 3.900 11.700 2.700 11.700a2.700 2.700 0 0 1 0-5.400C3.900 6.300 5.300 6.800 6.500 9z" fill="none" stroke="#3c9cf0" stroke-width="1.500"/></symbol>
<symbol id="expd" viewBox="0 0 6 6"><path d="M5.500.8v4.700H.8z" fill="#3b3b3b"/></symbol>
<symbol id="expc" viewBox="0 0 6 8"><path d="M1 .8 5 4 1 7.200z" fill="#fff" stroke="#9a9a9a" stroke-width=".8"/></symbol>
</defs></svg>
<div class="a" style="left:1050.8px;top:77px;width:224.3px;height:13.5px;background:linear-gradient(#4b5f87,#43577e);border-radius:2px 2px 0 0"></div>
<div class="t" style="left:1052.80px;top:80px;font-size:10.07px;color:#fff;transform:scaleX(0.8951);">Обозреватель решений</div>
<svg style="left:1242px;top:82.3px" width="6" height="3" viewBox="0 0 6 3"><path d="M0 0h6L3 3z" fill="#fff"/></svg><svg style="left:1254px;top:79.6px" width="6" height="8.4" viewBox="0 0 6 8.4"><path d="M1.400.4h2.800v4.600H1.400z" fill="none" stroke="#fff" stroke-width=".8"/><path d="M3.800.4v4.600" stroke="#fff" stroke-width="1.200"/><path d="M.2 5.200h5.400" stroke="#fff" stroke-width=".9"/><path d="M2.800 5.200v3.200" stroke="#fff" stroke-width=".9"/></svg><svg style="left:1265px;top:80.1px" width="7.5" height="6.6" viewBox="0 0 7.5 6.6"><path d="M.5.300 7 6.300M7 .3.500 6.300" stroke="#fff" stroke-width="1.300"/></svg>
<div class="a" style="left:1050.8px;top:90.3px;width:224.3px;height:19.6px;background:#bcc7d8"></div>
<div class="a" style="left:1050.8px;top:109.9px;width:224.3px;height:2px;background:#fff"></div>
<svg style="left:1056px;top:93.8px" width="12" height="11.5" viewBox="0 0 12 11.5"><path d="M.5 4.500V1h3l1 1h3.500v2.500" fill="#dcdcdc" stroke="#8a8f98" stroke-width=".8"/><rect x="2.500" y="4" width="9" height="7" fill="#f4f5f8" stroke="#7f8797" stroke-width=".8"/><rect x="2.500" y="4" width="9" height="2" fill="#a8b4cc"/><path d="M4 8.500h6M4 9.800h3" stroke="#8a92a4" stroke-width=".7"/></svg>
<div class="a" style="left:1072.8px;top:94px;width:1px;height:13px;background:#9dabc2"></div>
<svg style="left:1078px;top:94px" width="12.5" height="12" viewBox="0 0 12.5 12"><path d="M3 .5h5l1.500 1.500v6H3z" fill="#f2f5fb" stroke="#7a86a4" stroke-width=".7"/><path d="M1.500 3h5L8 4.500v6H1.500z" fill="#e8edf8" stroke="#5c6c94" stroke-width=".7"/><path d="M3 6h3.500M3 7.500h3.500M3 9h3.500" stroke="#4a74d0" stroke-width=".7"/><circle cx="9.800" cy="7.500" r="2.400" fill="#e8c860" stroke="#a08424" stroke-width=".6"/><path d="M1 .5l1.500 1.500M2.500.3v2M.3 1.800h2.500" stroke="#f0c838" stroke-width=".7"/></svg>
<svg style="left:1095px;top:95px" width="12" height="11.5" viewBox="0 0 12 11.5"><rect x=".5" y=".5" width="11" height="10.500" fill="#f8faff" stroke="#4a7ad8" stroke-width=".9"/><rect x=".5" y=".5" width="11" height="2" fill="#4a7ad8"/><path d="M3.500 6.500a2.600 2.300 0 0 1 4.600-1.300M8.500 7.300a2.600 2.300 0 0 1-4.600 1.300" fill="none" stroke="#2c9a34" stroke-width="1.300"/><path d="M9 3.800v2.400H6.600zM3 10V7.600h2.400z" fill="#2c9a34"/></svg>
<div class="a" style="left:1111.5px;top:94px;width:1px;height:13px;background:#9dabc2"></div>
<svg style="left:1117.8px;top:95.5px" width="11" height="10.5" viewBox="0 0 11 10.5"><rect x=".5" y=".5" width="10" height="9.500" fill="#fff" stroke="#a89f88" stroke-width="1.100"/><path d="M3.500 3h2.500M4.500 5h3M3.500 7h3.500" stroke="#2c4cf0" stroke-width="1.100"/><path d="M2 3h.8M2 7h.8" stroke="#888" stroke-width=".8"/></svg>
<div class="a" style="left:1050.8px;top:110px;width:224.3px;height:352.6px;overflow:hidden"><div class="a" style="left:0px;top:0px;width:224.3px;height:353px;background:#fff"></div><div class="a" style="left:7px;top:2px;width:178px;height:12.4px;background:linear-gradient(#fafafa,#e9e9e9);border:1px solid #d4d4d4;border-radius:2px"></div><svg style="left:8.4px;top:2.3px" width="11.6" height="11"><use href="#sln"/></svg><div class="t" style="left:24.30px;top:4px;font-size:9.96px;color:#000;transform:scaleX(0.8933);">Решение "2048_Bitmap"  (проектов: 1)</div><svg style="left:23px;top:16.02px" width="11.6" height="11"><use href="#csproj"/></svg><div class="t" style="left:38.90px;top:18px;font-size:9.96px;color:#000;font-weight:bold;transform:scaleX(0.9003);">2048_Bitmap</div><svg style="left:8.4px;top:19.22px" width="5" height="5"><use href="#expd"/></svg><svg style="left:37.9px;top:29.74px" width="11.6" height="11"><use href="#foldg"/></svg><div class="t" style="left:53.80px;top:32px;font-size:9.96px;color:#000;transform:scaleX(0.8705);">Properties</div><svg style="left:23.3px;top:32.94px" width="5" height="5"><use href="#expd"/></svg><svg style="left:52.05px;top:43.46px" width="11.6" height="11"><use href="#csf"/></svg><div class="t" style="left:67.95px;top:45px;font-size:9.96px;color:#000;transform:scaleX(0.9011);">AssemblyInfo.cs</div><svg style="left:52.05px;top:57.18px" width="11.6" height="11"><use href="#resx"/></svg><div class="t" style="left:67.95px;top:59px;font-size:9.96px;color:#000;transform:scaleX(0.8372);">Resources.resx</div><svg style="left:37.45px;top:60.38px" width="5" height="5"><use href="#expd"/></svg><svg style="left:66.7px;top:70.9px" width="11.6" height="11"><use href="#desf"/></svg><div class="t" style="left:82.60px;top:73px;font-size:9.96px;color:#000;transform:scaleX(0.8569);">Resources.Designer.cs</div><svg style="left:52.05px;top:84.62px" width="11.6" height="11"><use href="#setf"/></svg><div class="t" style="left:67.95px;top:87px;font-size:9.96px;color:#000;transform:scaleX(0.8941);">Settings.settings</div><svg style="left:37.45px;top:86.82px" width="5" height="7"><use href="#expc"/></svg><svg style="left:37.9px;top:98.34px" width="11.6" height="11"><use href="#refs"/></svg><div class="t" style="left:53.80px;top:100px;font-size:9.96px;color:#000;transform:scaleX(0.8988);">Ссылки</div><svg style="left:23.3px;top:100.54px" width="5" height="7"><use href="#expc"/></svg><svg style="left:37.9px;top:112.06px" width="11.6" height="11"><use href="#fold"/></svg><div class="t" style="left:53.80px;top:114px;font-size:9.96px;color:#000;transform:scaleX(0.8302);">Resources</div><svg style="left:23.3px;top:115.26px" width="5" height="5"><use href="#expd"/></svg><svg style="left:52.05px;top:125.78px" width="11.6" height="11"><use href="#png"/></svg><div class="t" style="left:67.95px;top:128px;font-size:9.96px;color:#000;transform:scaleX(0.9034);">_ fig.png</div><svg style="left:52.05px;top:139.5px" width="11.6" height="11"><use href="#png"/></svg><div class="t" style="left:67.95px;top:141px;font-size:9.96px;color:#000;transform:scaleX(0.8254);">__2.png</div><svg style="left:52.05px;top:153.22px" width="11.6" height="11"><use href="#png"/></svg><div class="t" style="left:67.95px;top:155px;font-size:9.96px;color:#000;transform:scaleX(0.8254);">__8.png</div><svg style="left:52.05px;top:166.94px" width="11.6" height="11"><use href="#png"/></svg><div class="t" style="left:67.95px;top:169px;font-size:9.96px;color:#000;transform:scaleX(0.8710);">__figa.png</div><svg style="left:52.05px;top:180.66px" width="11.6" height="11"><use href="#png"/></svg><div class="t" style="left:67.95px;top:183px;font-size:9.96px;color:#000;transform:scaleX(0.8457);">_1024.png</div><svg style="left:52.05px;top:194.38px" width="11.6" height="11"><use href="#png"/></svg><div class="t" style="left:67.95px;top:196px;font-size:9.96px;color:#000;transform:scaleX(0.8503);">_128.png</div><svg style="left:52.05px;top:208.1px" width="11.6" height="11"><use href="#png"/></svg><div class="t" style="left:67.95px;top:210px;font-size:9.96px;color:#000;transform:scaleX(0.8559);">_16.png</div><svg style="left:52.05px;top:221.82px" width="11.6" height="11"><use href="#png"/></svg><div class="t" style="left:67.95px;top:224px;font-size:9.96px;color:#000;transform:scaleX(0.8636);">_2.png</div><svg style="left:52.05px;top:235.54px" width="11.6" height="11"><use href="#png"/></svg><div class="t" style="left:67.95px;top:237px;font-size:9.96px;color:#000;transform:scaleX(0.8457);">_2048.png</div><svg style="left:52.05px;top:249.26px" width="11.6" height="11"><use href="#png"/></svg><div class="t" style="left:67.95px;top:251px;font-size:9.96px;color:#000;transform:scaleX(0.8559);">_21.png</div><svg style="left:52.05px;top:262.98px" width="11.6" height="11"><use href="#png"/></svg><div class="t" style="left:67.95px;top:265px;font-size:9.96px;color:#000;transform:scaleX(0.8503);">_256.png</div><svg style="left:52.05px;top:276.7px" width="11.6" height="11"><use href="#png"/></svg><div class="t" style="left:67.95px;top:279px;font-size:9.96px;color:#000;transform:scaleX(0.8559);">_32.png</div><svg style="left:52.05px;top:290.42px" width="11.6" height="11"><use href="#png"/></svg><div class="t" style="left:67.95px;top:292px;font-size:9.96px;color:#000;transform:scaleX(0.8636);">_4.png</div><svg style="left:52.05px;top:304.14px" width="11.6" height="11"><use href="#png"/></svg><div class="t" style="left:67.95px;top:306px;font-size:9.96px;color:#000;transform:scaleX(0.8503);">_512.png</div><svg style="left:52.05px;top:317.86px" width="11.6" height="11"><use href="#png"/></svg><div class="t" style="left:67.95px;top:320px;font-size:9.96px;color:#000;transform:scaleX(0.8559);">_64.png</div><svg style="left:52.05px;top:331.58px" width="11.6" height="11"><use href="#wav"/></svg><div class="t" style="left:67.95px;top:333px;font-size:9.96px;color:#000;transform:scaleX(0.8645);">loss.wav</div><svg style="left:52.05px;top:345.3px" width="11.6" height="11"><use href="#wav"/></svg><div class="t" style="left:67.95px;top:347px;font-size:9.96px;color:#000;transform:scaleX(0.9364);">victory.wav</div><div class="a" style="left:211.2px;top:0px;width:13.5px;height:353px;background:#f0f0f0"></div><div class="a" style="left:211.8px;top:15px;width:11.2px;height:252.5px;background:linear-gradient(90deg,#f2f2f2,#dddddd 50%,#cfcfcf);border:1px solid #979797;border-radius:2px"></div><div class="a" style="left:214.6px;top:138.5px;width:5.5px;height:1px;background:#8a8a8a"></div><div class="a" style="left:214.6px;top:140.5px;width:5.5px;height:1px;background:#8a8a8a"></div><div class="a" style="left:214.6px;top:142.5px;width:5.5px;height:1px;background:#8a8a8a"></div><svg style="left:215px;top:6.3px" width="5.6" height="3.2" viewBox="0 0 5.6 3.2"><path d="M0 3.200 2.800 0 5.600 3.200z" fill="#505050"/></svg><svg style="left:215px;top:344.2px" width="5.6" height="3.2" viewBox="0 0 5.6 3.2"><path d="M0 0 2.800 3.200 5.600 0z" fill="#505050"/></svg></div>
<div class="a" style="left:1050.8px;top:468.3px;width:224.3px;height:13.5px;background:linear-gradient(#4b5f87,#43577e);border-radius:2px 2px 0 0"></div>
<div class="t" style="left:1052.80px;top:472px;font-size:10.07px;color:#fff;transform:scaleX(0.8645);">Свойства</div>
<svg style="left:1242px;top:473.7px" width="6" height="3" viewBox="0 0 6 3"><path d="M0 0h6L3 3z" fill="#fff"/></svg><svg style="left:1254px;top:471px" width="6" height="8.4" viewBox="0 0 6 8.4"><path d="M1.400.4h2.800v4.600H1.400z" fill="none" stroke="#fff" stroke-width=".8"/><path d="M3.800.4v4.600" stroke="#fff" stroke-width="1.200"/><path d="M.2 5.200h5.400" stroke="#fff" stroke-width=".9"/><path d="M2.800 5.200v3.200" stroke="#fff" stroke-width=".9"/></svg><svg style="left:1265px;top:471.5px" width="7.5" height="6.6" viewBox="0 0 7.5 6.6"><path d="M.5.300 7 6.300M7 .3.500 6.300" stroke="#fff" stroke-width="1.300"/></svg>
<div class="a" style="left:1050.8px;top:481.6px;width:224.3px;height:22.4px;background:#fff;border:1px solid #c9d1de"></div>
<div class="a" style="left:1264.3px;top:486px;width:8px;height:14.7px;background:#efefef"></div>
<svg style="left:1266.3px;top:490.5px" width="6" height="3.5" viewBox="0 0 6 3.5"><path d="M0 0 3 3.500 6 0z" fill="#111"/></svg>
<div class="a" style="left:1050.8px;top:504.2px;width:224.3px;height:19.1px;background:#bcc7d8"></div>
<svg style="left:1055.3px;top:507px" width="13" height="12.5" viewBox="0 0 13 12.5"><rect x=".5" y="1" width="3.600" height="3.600" fill="#fff" stroke="#3a5a9c" stroke-width=".7"/><rect x=".5" y="7.500" width="3.600" height="3.600" fill="#fff" stroke="#3a5a9c" stroke-width=".7"/><path d="M1.300 2.800h2M1.300 9.300h2M2.300 8.300v2" stroke="#222" stroke-width=".7"/><path d="M5.500 2.800h4M6.500 5.200h6M6.500 9.300h4M6.500 11.500h6" stroke="#7a86a0" stroke-width=".9" stroke-dasharray="1.500 .8"/></svg>
<div class="a" style="left:1070.4px;top:505.2px;width:17.6px;height:16.4px;background:linear-gradient(#fff7dc,#ffe9a8);border:1px solid #e5c365;border-radius:1.5px"></div>
<svg style="left:1073px;top:507px" width="12.5" height="13" viewBox="0 0 12.5 13"><path d="M.8 5.500 2.800.8l2 4.700M1.500 4h2.600" fill="none" stroke="#2838c0" stroke-width="1"/><path d="M.8 7.500h3.800L.8 12.300h3.800" fill="none" stroke="#a82828" stroke-width="1"/><path d="M8.500.5v10" stroke="#111" stroke-width="1.200"/><path d="M6.300 8.500h4.400L8.500 12.500z" fill="#111"/></svg>
<div class="a" style="left:1090.6px;top:506px;width:1px;height:14.5px;background:#8e9bb3"></div>
<svg style="left:1095px;top:507.5px" width="12" height="11.5" viewBox="0 0 12 11.5"><rect x=".5" y=".5" width="11" height="10.500" fill="#d4d8e0" stroke="#a2a8b6" stroke-width=".9"/><rect x="2.500" y="3.500" width="7" height="3.500" fill="#e4e7ed" stroke="#a2a8b6" stroke-width=".7"/><path d="M2.500 2h7" stroke="#b4bac6" stroke-width=".8"/></svg>
<div class="a" style="left:1050.8px;top:523.3px;width:224.3px;height:176px;background:#fff"></div>
<div class="a" style="left:1050.8px;top:699.2px;width:224.3px;height:47.7px;background:#dfe2ea"></div>
<div class="a" style="left:1050.8px;top:699.2px;width:224.3px;height:2.4px;background:#e6e8ee"></div>
<div class="a" style="left:1050.8px;top:701.6px;width:224.3px;height:1px;background:#b6bac3"></div>
<div class="a" style="left:21px;top:601.2px;width:1025px;height:14.2px;background:linear-gradient(#4b5f87,#43577e);border-radius:2px 2px 0 0"></div>
<div class="t" style="left:22.50px;top:605px;font-size:10.07px;color:#fff;transform:scaleX(0.9393);">Список ошибок</div>
<svg style="left:1013px;top:607px" width="6" height="3" viewBox="0 0 6 3"><path d="M0 0h6L3 3z" fill="#fff"/></svg><svg style="left:1025px;top:604.3px" width="6" height="8.4" viewBox="0 0 6 8.4"><path d="M1.400.4h2.800v4.600H1.400z" fill="none" stroke="#fff" stroke-width=".8"/><path d="M3.800.4v4.600" stroke="#fff" stroke-width="1.200"/><path d="M.2 5.200h5.400" stroke="#fff" stroke-width=".9"/><path d="M2.800 5.200v3.200" stroke="#fff" stroke-width=".9"/></svg><svg style="left:1036px;top:604.8px" width="7.5" height="6.6" viewBox="0 0 7.5 6.6"><path d="M.5.300 7 6.300M7 .3.500 6.300" stroke="#fff" stroke-width="1.300"/></svg>
<div class="a" style="left:21px;top:615.3px;width:1025px;height:20px;background:#bcc7d8"></div>
<div class="a" style="left:23.5px;top:617.6px;width:68.5px;height:15.8px;background:linear-gradient(#fef2cc,#fdeab4);border:1px solid #e6c878;border-radius:1px"></div>
<div class="a" style="left:97.5px;top:617.6px;width:101px;height:15.8px;background:linear-gradient(#fef2cc,#fdeab4);border:1px solid #e6c878;border-radius:1px"></div>
<div class="a" style="left:204.5px;top:617.6px;width:83.5px;height:15.8px;background:linear-gradient(#fef2cc,#fdeab4);border:1px solid #e6c878;border-radius:1px"></div>
<div class="a" style="left:94.5px;top:619px;width:1px;height:13px;background:#8d9bb3"></div>
<div class="a" style="left:201.3px;top:619px;width:1px;height:13px;background:#8d9bb3"></div>
<div class="t" style="left:41.30px;top:622px;font-size:9.96px;color:#000;transform:scaleX(0.9384);">Ошибок: 0</div>
<div class="t" style="left:114.50px;top:622px;font-size:9.96px;color:#000;transform:scaleX(0.9040);">1 предупреждение</div>
<div class="t" style="left:221.80px;top:622px;font-size:9.96px;color:#000;transform:scaleX(0.9193);">Сообщений: 0</div>
<svg style="left:27px;top:620.3px" width="10.5" height="10.5" viewBox="0 0 10.5 10.5"><circle cx="5.250" cy="5.250" r="5" fill="#d83a2a" stroke="#9c2419" stroke-width=".5"/><path d="M3.200 3.200l4.100 4.100M7.300 3.200l-4.100 4.100" stroke="#fff" stroke-width="1.500"/></svg>
<svg style="left:100.5px;top:620px" width="11.5" height="10.5" viewBox="0 0 11.5 10.5"><path d="M5.750.5 11 10H.5z" fill="#ffd92e" stroke="#8a6d00" stroke-width=".7"/><path d="M5.750 3.500v3.500M5.750 8v1" stroke="#000" stroke-width="1.200"/></svg>
<svg style="left:207.5px;top:620.3px" width="10.5" height="10.5" viewBox="0 0 10.5 10.5"><circle cx="5.250" cy="5.250" r="4.800" fill="#fff" stroke="#3d63b8" stroke-width=".9"/><path d="M5.250 4.300v4" stroke="#2a50b0" stroke-width="1.400"/><circle cx="5.250" cy="2.700" r=".8" fill="#2a50b0"/></svg>
<div class="a" style="left:21px;top:635.3px;width:1025px;height:111.9px;background:#fff"></div>
<div class="a" style="left:21px;top:635.3px;width:1025px;height:17.4px;background:linear-gradient(#ffffff,#f3f4f6);border-bottom:1px solid #d5d5d5"></div>
<div class="a" style="left:48px;top:635.3px;width:708.5px;height:17.4px;background:linear-gradient(#f3f9fd 0,#eff7fc 42%,#dfeff9 48%,#d9ecf8 100%);border:1px solid #9dd5ef;border-top:none"></div>
<div class="a" style="left:21px;top:653px;width:1025px;height:16.6px;background:#eeeeee"></div>
<div class="a" style="left:33px;top:635.3px;width:1px;height:111.9px;background:#ececec"></div>
<div class="a" style="left:47.5px;top:635.3px;width:1px;height:111.9px;background:#ececec"></div>
<div class="a" style="left:756.5px;top:635.3px;width:1px;height:111.9px;background:#ececec"></div>
<div class="a" style="left:847.5px;top:635.3px;width:1px;height:111.9px;background:#ececec"></div>
<div class="a" style="left:900.7px;top:635.3px;width:1px;height:111.9px;background:#ececec"></div>
<div class="a" style="left:954.3px;top:635.3px;width:1px;height:111.9px;background:#ececec"></div>
<div class="a" style="left:21px;top:684.4px;width:1025px;height:1px;background:#ececec"></div>
<div class="a" style="left:21px;top:699.8px;width:1025px;height:1px;background:#ececec"></div>
<div class="a" style="left:21px;top:715.2px;width:1025px;height:1px;background:#ececec"></div>
<div class="a" style="left:21px;top:730.6px;width:1025px;height:1px;background:#ececec"></div>
<div class="t" style="left:52.50px;top:641px;font-size:9.96px;color:#000;transform:scaleX(0.9171);">Описание</div>
<div class="t" style="left:761.50px;top:641px;font-size:9.96px;color:#000;transform:scaleX(0.8944);">Файл</div>
<div class="t" style="left:852.70px;top:641px;font-size:9.96px;color:#000;transform:scaleX(0.8896);">Строка</div>
<div class="t" style="left:906.00px;top:641px;font-size:9.96px;color:#000;transform:scaleX(0.9092);">Столбец</div>
<div class="t" style="left:959.40px;top:641px;font-size:9.96px;color:#000;transform:scaleX(0.9208);">Проект</div>
<svg style="left:399.6px;top:636px" width="5.6" height="3" viewBox="0 0 5.6 3"><path d="M0 0h5.600L2.800 3z" fill="#6fb0dc"/></svg>
<svg style="left:22.5px;top:657px" width="8.5" height="8" viewBox="0 0 8.5 8"><path d="M4.250.4 8.200 7.600H.3z" fill="#ffd92e" stroke="#8a6d00" stroke-width=".6"/><path d="M4.250 2.800v2.400M4.250 6v.8" stroke="#000" stroke-width="1"/></svg>
<div class="t" style="left:35.00px;top:658px;font-size:9.96px;color:#000;">1</div>
<div class="t" style="left:49.50px;top:658px;font-size:9.96px;color:#000;transform:scaleX(0.9255);">Переменной "fl" присвоено значение, но оно ни разу не использовано</div>
<div class="t" style="left:758.40px;top:658px;font-size:9.96px;color:#000;transform:scaleX(0.8508);">Game_Grid.cs</div>
<div class="t" style="left:849.00px;top:658px;font-size:9.96px;color:#000;transform:scaleX(0.8693);">114</div>
<div class="t" style="left:902.20px;top:658px;font-size:9.96px;color:#000;transform:scaleX(0.8395);">18</div>
<div class="t" style="left:956.00px;top:658px;font-size:9.96px;color:#000;transform:scaleX(0.8695);">2048_Bitmap</div>
<div class="a" style="left:0px;top:749.3px;width:1280px;height:21px;background:#293955"></div>
<div class="t" style="left:3.00px;top:757px;font-size:10.07px;color:#fff;transform:scaleX(0.9170);">Готово</div>
<div class="t" style="left:1010.70px;top:757px;font-size:10.07px;color:#fff;transform:scaleX(0.8548);">Строка 454</div>
<div class="t" style="left:1080.50px;top:757px;font-size:10.07px;color:#fff;transform:scaleX(0.8609);">Столбец 31</div>
<div class="t" style="left:1150.40px;top:757px;font-size:10.07px;color:#fff;transform:scaleX(0.8589);">Знак 31</div>
<div class="t" style="left:1254.50px;top:757px;font-size:10.07px;color:#fff;transform:scaleX(0.8475);">ВСТ</div>
<div class="a" style="left:0px;top:769.6px;width:1280px;height:30.4px;background:linear-gradient(90deg,#8b9fb9 0,#8fa4bf 44px,#a6bdd9 70px,#b3cdea 94px,#b1cceb 1040px,#8da5c2 1132px,#869ebb 1280px)"></div>
<div class="a" style="left:0px;top:769.6px;width:1280px;height:30.4px;background:linear-gradient(115deg,rgba(255,255,255,0) 0,rgba(255,255,255,0) 30%,rgba(255,255,255,.13) 34%,rgba(255,255,255,0) 39%,rgba(255,255,255,.1) 44%,rgba(255,255,255,0) 50%,rgba(255,255,255,.12) 62%,rgba(255,255,255,0) 68%,rgba(255,255,255,0) 100%)"></div>
<div class="a" style="left:0px;top:769.6px;width:1280px;height:0.8px;background:rgba(60,80,112,.7)"></div>
<div class="a" style="left:0px;top:770.4px;width:1280px;height:1px;background:rgba(255,255,255,.3)"></div>
<div class="a" style="left:45.6px;top:770.3px;width:44.6px;height:32px;background:linear-gradient(135deg,rgba(255,255,255,.5),rgba(255,255,255,.2) 50%,rgba(255,255,255,.32));border:1px solid rgba(60,78,108,.85);border-radius:2.5px;box-shadow:inset 0 0 0 1px rgba(255,255,255,.6)"></div>
<div class="a" style="left:234.6px;top:770.3px;width:44.6px;height:32px;background:linear-gradient(135deg,rgba(255,255,255,.5),rgba(255,255,255,.2) 50%,rgba(255,255,255,.32));border:1px solid rgba(60,78,108,.85);border-radius:2.5px;box-shadow:inset 0 0 0 1px rgba(255,255,255,.6)"></div>
<div class="a" style="left:282px;top:770.3px;width:44.6px;height:32px;background:linear-gradient(135deg,rgba(255,255,255,.5),rgba(255,255,255,.2) 50%,rgba(255,255,255,.32));border:1px solid rgba(60,78,108,.85);border-radius:2.5px;box-shadow:inset 0 0 0 1px rgba(255,255,255,.6)"></div>
<div class="a" style="left:376.2px;top:770.3px;width:44.6px;height:32px;background:linear-gradient(135deg,rgba(255,255,255,.5),rgba(255,255,255,.2) 50%,rgba(255,255,255,.32));border:1px solid rgba(60,78,108,.85);border-radius:2.5px;box-shadow:inset 0 0 0 1px rgba(255,255,255,.6)"></div>
<div class="a" style="left:329px;top:770.3px;width:44.6px;height:32px;background:linear-gradient(135deg,rgba(255,255,255,.72),rgba(255,255,255,.45) 50%,rgba(255,255,255,.55));border:1px solid rgba(60,78,108,.85);border-radius:2.5px;box-shadow:inset 0 0 0 1px rgba(255,255,255,.7)"></div>
<svg style="left:6.7px;top:770.8px" width="27.6" height="27.6" viewBox="0 0 27.6 27.6"><defs><radialGradient id="og" cx=".5" cy=".98" r=".8"><stop offset="0" stop-color="#18e4ff"/><stop offset=".3" stop-color="#0c8cd8"/><stop offset=".62" stop-color="#0a559c"/><stop offset="1" stop-color="#0c3f78"/></radialGradient><linearGradient id="oh" x1="0" y1="0" x2="0" y2="1"><stop offset="0" stop-color="#e8f0f8" stop-opacity=".95"/><stop offset="1" stop-color="#9cb8d8" stop-opacity=".7"/></linearGradient></defs><circle cx="13.800" cy="13.800" r="13.400" fill="url(#og)" stroke="#2a5a94" stroke-width=".8"/><path d="M.9 13.300a12.900 12.900 0 0 1 25.800 0c-8 -2 -17.800 -2 -25.800 0z" fill="url(#oh)" opacity=".78"/><path d="M8.400 6.200c1.900-1.300 4.400-1.300 6.800 0l-1.400 6.300c-2.200-1.200-4.600-1.200-6.900 0z" fill="#ee5a24"/><path d="M8.400 6.200c1.900-1.300 4.400-1.300 6.800 0l-.7 3.200c-2.200-1.200-4.600-1.200-6.800 0z" fill="#e8401c"/><path d="M16.100 7c2.300 1.300 4.700 1.300 7.200.2l-1.500 6.700c-2.400 1.100-4.800 1.100-7.100-.2z" fill="#8cc43c"/><path d="M6.400 13.600c2.300-1.200 4.700-1.200 7 .1l-1.400 6.500c-2.200-1.200-4.700-1.200-7.100 0z" fill="#2c94e8"/><path d="M14.300 14.800c2.300 1.300 4.700 1.300 7.200.2l-1.400 6.500c-2.500 1.100-4.900 1.100-7.300-.2z" fill="#fcc42c"/></svg>
<svg style="left:55.5px;top:774.5px" width="24.5" height="22.5" viewBox="0 0 24.5 22.5"><path d="M1 4.500C1 3 2 2.500 3 2.500h5.500l1.500 1.500h12c1 0 1.500.5 1.500 1.500V19H1z" fill="#f0d06c" stroke="#c8a43c" stroke-width=".6"/><rect x="3.500" y="1.500" width="7" height="2.500" fill="#fff"/><rect x="3" y="1.300" width="2.500" height="2" fill="#18b838"/><rect x="9.500" y="3" width="7" height="2.500" fill="#fff"/><rect x="9.200" y="2.800" width="2.400" height="2" fill="#e03424"/><rect x="15" y="4.500" width="7" height="2.500" fill="#fff"/><rect x="14.800" y="4.300" width="2.400" height="2" fill="#1c8ce8"/><path d="M1 7h22.500v12.500H1z" fill="#f8e69c" stroke="#d8b850" stroke-width=".5"/><path d="M3.500 21.500V14c0-1 .8-1.800 1.800-1.800h14c1 0 1.800.8 1.800 1.800v7.500h-3.600V17H7v4.500z" fill="#6cc0f0" stroke="#3c94d0" stroke-width=".6"/><path d="M4.500 13.200h15.500" stroke="#c8ecff" stroke-width="1.200"/></svg>
<svg style="left:103px;top:772.6px" width="24" height="24.3" viewBox="0 0 24 24.3"><rect width="24" height="24.300" rx="3" fill="#1b98dc"/><rect x="3" y="3" width="18" height="18.300" rx="2.500" fill="#fff"/><path d="M11.700 6.600H6.400v11.300h5.300M12.500 6.600h5.300v11.300h-5.300" fill="none" stroke="#3c3f44" stroke-width="3"/></svg>
<svg style="left:150px;top:772.5px" width="25.5" height="24.5" viewBox="0 0 25.5 24.5"><defs><linearGradient id="ie" x1="0" y1="0" x2="0" y2="1"><stop offset="0" stop-color="#1c5cb8"/><stop offset=".6" stop-color="#2c90e0"/><stop offset="1" stop-color="#58c8f8"/></linearGradient></defs><path d="M12.500 3.500c5 0 8.800 3.800 8.800 9.700H9c.2 2.200 1.800 3.600 4 3.600 1.600 0 2.800-.7 3.500-1.900h4.400c-1.200 3.800-4.200 6-8.200 6-5.200 0-9-3.800-9-8.700s3.800-8.700 8.800-8.700zm-.2 4c-1.800 0-3 1.100-3.300 2.900h6.800c-.3-1.800-1.600-2.900-3.500-2.900z" fill="url(#ie)" stroke="#184c9c" stroke-width=".4"/><path d="M22.500 3.500C20 -1 9 4 3.500 12.500S.5 25.500 6 23" fill="none" stroke="#f4bc24" stroke-width="1.700"/><path d="M22.500 3.500c.8 1.500.3 3.500-.8 5.500" fill="none" stroke="#f4bc24" stroke-width="1.500"/></svg>
<svg style="left:198.5px;top:775px" width="23" height="21" viewBox="0 0 23 21"><path d="M3 11C3 -2.500 20 -2.500 20 11" fill="none" stroke="#1c1ca4" stroke-width="2.200"/><rect x=".3" y="8" width="5.400" height="9.800" rx="2.400" fill="#1a1a9c"/><rect x="17.300" y="8" width="5.400" height="9.800" rx="2.400" fill="#1a1a9c"/><path d="M5.500 12c0-4 1-8 2.300-8 .9 0 1 2.500 1.700 2.500S10.300 3.500 11.500 3.500s1.200 3 1.900 3 .9-2.500 1.800-2.500c1.300 0 2.300 4 2.300 8s-1 8.500-2.300 8.500c-.9 0-1-2.500-1.700-2.500s-.9 3-1.900 3-1.200-3-1.900-3-.9 2.500-1.800 2.500c-1.300 0-2.400-4.500-2.400-8.500z" fill="#fcd41c"/><path d="M5.500 12.300c1.500-3 2.500-1.500 3.800-2.800s1.800-.5 3-2 2 1.500 3.200 1.800 1.500 1.500 2 3c-.5 1.500-1 2.800-2.200 3s-1.800 3-3 1.500-1.800-.5-3-2-2.300.5-3.800-2.500z" fill="#f4741c"/><path d="M6 12.300c1.500-1.300 2.500.8 3.800-.3s1.800 1.300 3 0 2-.5 4.200.3c-2.200 1-3 1.500-4.200.3s-1.800 1-3 0-2.300.8-3.800-.3z" fill="#e82c1c"/></svg>
<svg style="left:244.8px;top:772.8px" width="23.6" height="23.6" viewBox="0 0 23.6 23.6"><circle cx="11.800" cy="11.800" r="11.700" fill="#fbc116"/><path d="M11.800 11.800 1.700 5.900A11.700 11.700 0 0 1 21.900 5.900z" fill="#e34133"/><path d="M1.700 5.900A11.700 11.700 0 0 0 11.800 23.500l5-8.700-5-3z" fill="#2ba24c"/><path d="M1.700 5.900l5 8.800 5.100-2.900z" fill="#2ba24c"/><path d="M21.900 5.900H11.800v5.900l5 3z" fill="#fbc116"/><path d="M11.800 6h10a11.700 11.700 0 0 0-20 0z" fill="#e34133"/><circle cx="11.800" cy="11.800" r="5.300" fill="#fff"/><circle cx="11.800" cy="11.800" r="4.200" fill="#4688f1"/></svg>
<svg style="left:292px;top:772.5px" width="24" height="23.6" viewBox="0 0 24 23.6"><defs><radialGradient id="ff" cx=".65" cy=".2" r=".95"><stop offset="0" stop-color="#fff36a"/><stop offset=".3" stop-color="#ffbd2e"/><stop offset=".6" stop-color="#ff7a16"/><stop offset=".85" stop-color="#f02c50"/><stop offset="1" stop-color="#d81c78"/></radialGradient></defs><path d="M12 3.500c2-1 3.200-3.300 3.200-3.300 1 2.200 3.200 3.300 5 5.500 3 3 3.500 6.300 3.500 7 0 6-5.200 10.800-11.700 10.800S.3 18.800.3 12.800c0-3 1-5 2-6.300 0 0 .5 1.300 1.200 1.800 0-2 1.500-4 2.300-4.500 0 1.500 1.300 3 2.400 3z" fill="url(#ff)"/><circle cx="12.200" cy="12.800" r="5.600" fill="#7b3fe0"/><path d="M7 9.500c2-1 4.500-.5 5.500.8-1.500-.5-3 .2-3.300 1.500s.8 2.700 2.800 2.700c2.500 0 4.200-1.800 4.200-3.800 1 1 1.800 4.500-.5 6.800S9.500 20 7.500 18 5.500 12 7 9.500z" fill="#ff8a1c"/><path d="M8.500 7.500C10.500 6 14 6.200 16 8.200c-1.500-.6-3.500-.6-4.500 0z" fill="#b02cd0"/></svg>
<svg style="left:340px;top:775px" width="23.5" height="19.5" viewBox="0 0 23.5 19.5"><rect x=".7" y=".7" width="20" height="15.800" fill="#2c8c34" stroke="#1c6424" stroke-width=".8"/><rect x="2.300" y="2.300" width="16.800" height="12.600" fill="#e8f4e8"/><path d="M9.300 5.800a3.100 3.100 0 1 0 0 5.600" fill="none" stroke="#1c8c2c" stroke-width="1.800"/><path d="M12 5v7.500M15 4.500v7.500M10.600 7.300h5.900M10.200 9.800h5.900" stroke="#1c8c2c" stroke-width="1.300"/><path d="M4 15.500h14v-2l5 3.600-5 2.400v-1.800C12 18 7 17.500 4 15.500z" fill="#3c6cdc" stroke="#2448a8" stroke-width=".4"/></svg>
<svg style="left:385.5px;top:772.5px" width="25" height="24.5" viewBox="0 0 25 24.5"><path d="M2 16C-1 10 6 3.500 14 4c6 .3 9.500 4 8.300 9.500-1.200 5.500-5.800 8.500-9.300 8.500-2.500 0-3-1.500-2.500-3s-.5-2.500-2.500-2-4.500 1-6-1z" fill="#d4e8f8" stroke="#7ca8d4" stroke-width=".8"/><circle cx="4.800" cy="12.500" r="1.900" fill="#e8543c"/><circle cx="8.500" cy="8.500" r="1.900" fill="#58b848"/><circle cx="14" cy="7" r="1.900" fill="#f0a42c"/><ellipse cx="11" cy="14" rx="1.600" ry="1.300" fill="#c4dcf0" stroke="#8cb0d8" stroke-width=".6"/><path d="M21.500 5 13.200 23.500" stroke="#e08c2c" stroke-width="1.800"/><path d="M21 1c1.500-1 3.500.5 3 2.500L21.800 7 19.800 6z" fill="#e8c090" stroke="#b08850" stroke-width=".5"/></svg>
<div class="t" style="left:1136.00px;top:779px;font-size:9.96px;color:#fff;transform:scaleX(0.7593);">EN</div>
<div class="t" style="left:1232.00px;top:776px;font-size:9.96px;color:#fff;transform:scaleX(0.8052);">0:09</div>
<div class="t" style="left:1219.00px;top:788px;font-size:9.96px;color:#fff;transform:scaleX(0.8228);">10.02.2020</div>
<svg style="left:1159.5px;top:783.3px" width="6.4" height="3.6" viewBox="0 0 6.4 3.6"><path d="M0 3.600 3.200 0 6.400 3.600z" fill="#fff"/></svg>
<svg style="left:1174.5px;top:779px" width="13" height="13" viewBox="0 0 13 13"><path d="M1.500.5v12" stroke="#6c7480" stroke-width="1.400"/><path d="M2.300 1.500c2-1 3.500 1 5.500 0v5.500c-2 1-3.500-1-5.500 0z" fill="#fff" stroke="#8c94a0" stroke-width=".5"/><path d="M7.800 2.500c1.200.6 2.200.3 3.200-.2v5c-1 .5-2 .8-3.200.2z" fill="#dfe4ec" stroke="#8c94a0" stroke-width=".4"/><circle cx="8.500" cy="9" r="3.600" fill="#e0241c" stroke="#fff" stroke-width=".5"/><path d="M6.900 7.400l3.200 3.200M10.100 7.400 6.900 10.600" stroke="#fff" stroke-width="1.200"/></svg>
<svg style="left:1193.5px;top:779px" width="12.5" height="13" viewBox="0 0 12.5 13"><rect x="3.800" y="3.300" width="8" height="6.200" fill="#5c7088" stroke="#f4f6fa" stroke-width=".9"/><path d="M5.500 12h5M8 9.800v2" stroke="#f4f6fa" stroke-width="1.100"/><rect x=".6" y="1.600" width="3.800" height="4.200" fill="#e8ecf2" stroke="#3c444c" stroke-width=".7"/><path d="M2.500 0v1.600M1.800 5.800V8h2" stroke="#3c444c" stroke-width=".8" fill="none"/></svg>
<div class="a" style="left:1268.6px;top:770.6px;width:12px;height:30px;background:linear-gradient(180deg,rgba(255,255,255,.12),rgba(255,255,255,.08) 60%,rgba(200,225,255,.45));border-left:1px solid rgba(70,86,112,.75);box-shadow:inset 1px 0 0 rgba(255,255,255,.45)"></div>
</body></html>
